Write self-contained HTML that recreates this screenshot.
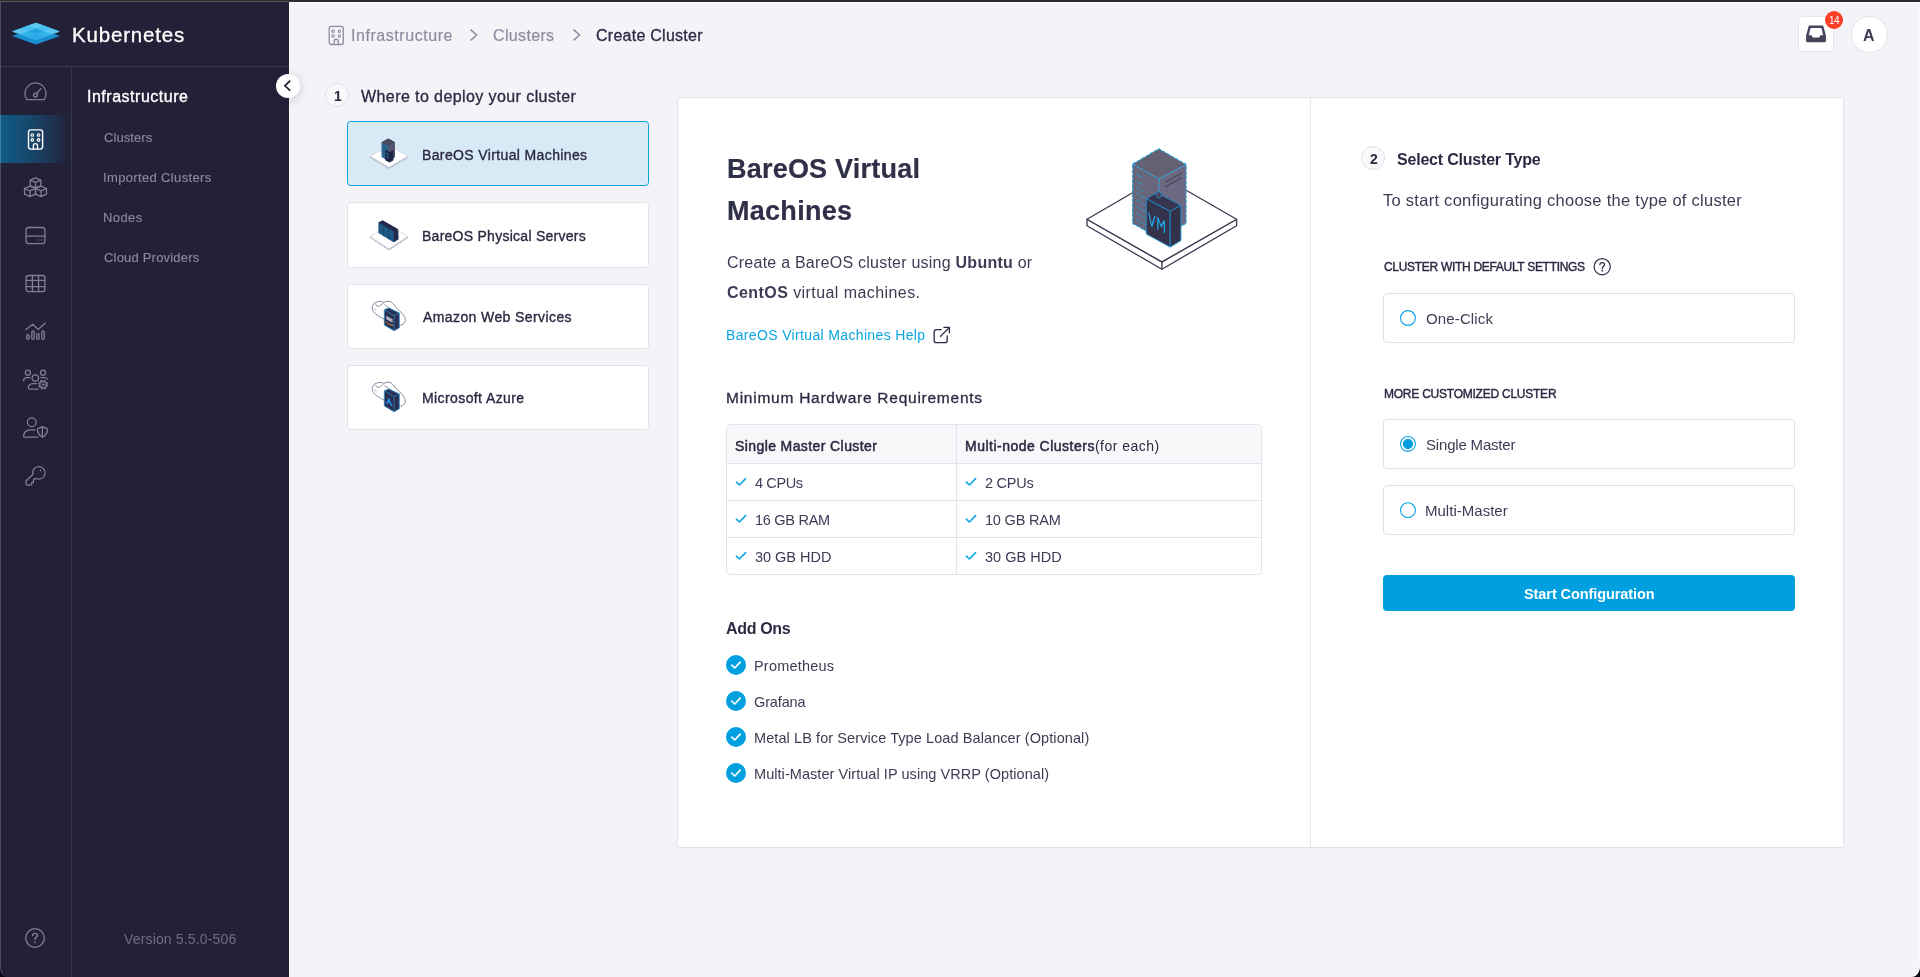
<!DOCTYPE html>
<html lang="en">
<head>
<meta charset="utf-8">
<title>Create Cluster - Kubernetes</title>
<style>
*{box-sizing:border-box;margin:0;padding:0}
html,body{width:1920px;height:977px;overflow:hidden;font-family:"Liberation Sans",sans-serif}
body{position:relative;background:#0b0616;font-family:"Liberation Sans",sans-serif;color:#2b2a43}
.abs{position:absolute}
.t{position:absolute;white-space:nowrap;line-height:1;display:block;will-change:transform}
#topbar{left:0;top:0;width:1920px;height:2px;background:#2b2b2b}
#topbar2{left:0;top:1px;width:289px;height:1px;background:#5c5c5c}
#sidebar{left:0;top:2px;width:289px;height:975px;background:#232138;border-bottom-left-radius:6px 10px;overflow:hidden}
#edgeL{left:0;top:2px;width:289px;height:975px;border-left:1px solid rgba(255,255,255,.2);border-bottom:1px solid rgba(255,255,255,0);border-bottom-left-radius:6px 10px}
#main{left:289px;top:2px;width:1631px;height:975px;background:#f3f3f8;border-bottom-right-radius:8px 11px;box-shadow:inset 1px 1px 0 #fdfdff,inset -1px 0 0 #f9f9fd}
#hdrline{left:0;top:66px;width:288px;height:1px;background:#3a384f}
#railline{left:71px;top:67px;width:1px;height:910px;background:#3a384f}
#active{left:0;top:115px;width:71px;height:48px;background:linear-gradient(90deg,#105c87 0%,#17486d 40%,#1f3150 75%,#232138 97%)}
.nav{position:absolute;left:15px;width:40px;height:40px;fill:none;stroke:#807f95;stroke-width:1.3;stroke-linecap:round;stroke-linejoin:round}
.card{position:absolute;left:347px;width:302px;height:65px;background:#fff;border:1px solid #e2e2e9;border-radius:3.5px}
.card.sel{background:#d7eaf6;border-color:#04a0e0}
#panel{left:677px;top:97px;width:1167px;height:751px;background:#fff;border:1px solid #e3e3eb;border-radius:2px}
#divider{left:1310px;top:98px;width:1px;height:749px;background:#e6e6ee}
.stepc{position:absolute;width:24px;height:24px;border-radius:50%;background:#f9f9fb;border:1px solid #e2e2ea}
.rbox{position:absolute;left:1383px;width:412px;height:50px;background:#fff;border:1px solid #e0e0e8;border-radius:4px}
.radio{position:absolute;left:1398px;width:20px;height:20px}
#btn{left:1383px;top:575px;width:412px;height:36px;background:#009fe0;border-radius:4px}
#tbl{left:726px;top:424px;width:536px;height:151px;border:1px solid #e3e3eb;border-radius:4px;background:#fff;overflow:hidden}
#tblh{left:0;top:0;width:536px;height:38px;background:#f8f8fb}
.hl{position:absolute;left:0;width:536px;height:1px;background:#e3e3eb}
#vl{left:229px;top:0;width:1px;height:151px;background:#e3e3eb}
.chk{position:absolute;width:12px;height:10px;fill:none;stroke:#0aa5e2;stroke-width:1.6;stroke-linecap:round;stroke-linejoin:round}
.cc{position:absolute;left:726px;width:20px;height:20px}
#inbox{left:1798px;top:16px;width:36px;height:36px;background:#fff;border:1px solid #e6e6ee;border-radius:5px}
#badge{left:1825px;top:11px;width:18px;height:18px;border-radius:50%;background:#fc3f27}
#avatar{left:1850.5px;top:15.5px;width:37px;height:37px;border-radius:50%;background:#fff;border:1px solid #e3e3eb}
#collapse{left:276px;top:74px;width:24px;height:24px;border-radius:50%;background:#fff;box-shadow:0 2px 12px rgba(40,40,70,.2)}
</style>
</head>
<body>
<div class="abs" id="main"></div>
<div class="abs" id="sidebar"></div>
<div class="abs" id="topbar"></div>
<div class="abs" id="topbar2"></div>
<!-- ===== Sidebar ===== -->
<div class="abs" id="hdrline"></div>
<div class="abs" id="railline"></div>
<div class="abs" id="active"></div>
<div class="abs" id="edgeL"></div>
<svg class="abs" style="left:10px;top:20px" width="52" height="28" viewBox="0 0 52 28">
  <polygon points="2,16 25.9,7.6 49.9,16 25.9,24.4" fill="#1b8fd2"/>
  <polygon points="2,11.4 25.9,2.7 49.9,11.4 25.9,20.2" fill="#33b4ea"/>
  <polygon points="25.9,2.7 33.9,5.6 25.9,8.5 17.9,5.6" fill="#5cc7f0"/>
  <polygon points="33.9,5.6 41.9,8.5 33.9,11.4 25.9,8.5" fill="#48bfee"/>
  <polygon points="17.9,5.6 25.9,8.5 17.9,11.4 9.9,8.5" fill="#48bfee"/>
  <polygon points="41.9,8.5 49.9,11.4 41.9,14.3 33.9,11.4" fill="#5cc7f0"/>
  <polygon points="9.9,8.5 17.9,11.4 9.9,14.3 2,11.4" fill="#5cc7f0"/>
  <polygon points="25.9,8.5 33.9,11.4 25.9,14.3 17.9,11.4" fill="#22a4e2"/>
  <polygon points="25.9,14.3 33.9,17.2 25.9,20.2 17.9,17.2" fill="#2aaae6"/>
</svg>
<!-- nav icons: each svg is 40x40 -->
<svg class="nav" style="top:72px" viewBox="0 0 40 40"><path d="M11.8 27.6H29.2A10.6 10.6 0 1 0 11.8 27.6Z"/><circle cx="20.5" cy="23.1" r="1.9"/><path d="M21.8 21.6L25.8 16.6"/></svg>
<svg class="nav" style="top:119px;stroke:#fff;stroke-width:1.4" viewBox="0 0 40 40"><rect x="13.5" y="10.9" width="14.1" height="19.2" rx="2.3"/><circle cx="17.3" cy="16" r="1.25" stroke-width="1.2"/><circle cx="23.6" cy="16" r="1.25" stroke-width="1.2"/><circle cx="17.3" cy="20.9" r="1.25" stroke-width="1.2"/><circle cx="23.6" cy="20.9" r="1.25" stroke-width="1.2"/><path d="M18.4 30V26.7A2.05 2.05 0 0 1 22.5 26.7V30"/></svg>
<svg class="nav" style="top:167px" viewBox="0 0 40 40"><path d="M20.5 10.9L25.8 13.1V18.8L20.5 20.9L15.2 18.8V13.1ZM15.2 13.1L20.5 15.4L25.8 13.1M20.5 15.4V20.9"/><path d="M14.95 19.2L20.5 21.5V27.2L14.95 29.7L9.5 27.2V21.5ZM9.5 21.5L14.95 23.8L20.5 21.5M14.95 23.8V29.7"/><path d="M26.05 19.2L31.5 21.5V27.2L26.05 29.7L20.5 27.2V21.5ZM20.5 21.5L26.05 23.8L31.5 21.5M26.05 23.8V29.7"/></svg>
<svg class="nav" style="top:215px" viewBox="0 0 40 40"><rect x="11.1" y="12.5" width="18.8" height="16.1" rx="2.6"/><path d="M11.1 21.1H29.9"/><circle cx="22.9" cy="24.9" r=".7" fill="#807f95" stroke="none"/><circle cx="26.6" cy="24.9" r=".7" fill="#807f95" stroke="none"/></svg>
<svg class="nav" style="top:263px" viewBox="0 0 40 40"><rect x="11.1" y="12.5" width="18.8" height="16.1" rx="2.6"/><path d="M17.4 12.5V28.6M23.55 12.5V28.6M11.1 17.4H29.9M11.1 23.55H29.9"/></svg>
<svg class="nav" style="top:311px" viewBox="0 0 40 40"><path d="M10.9 18.6L17.8 13.3L23.1 18.6L30.3 12.1"/><rect x="11.7" y="23.7" width="2.4" height="4.6" rx="1.2"/><rect x="16.8" y="20" width="2.4" height="8.3" rx="1.2"/><rect x="21.75" y="22.7" width="2.4" height="5.6" rx="1.2"/><rect x="26.85" y="19.85" width="2.4" height="8.45" rx="1.2"/></svg>
<svg class="nav" style="top:359px" viewBox="0 0 40 40"><circle cx="12.9" cy="13.7" r="2.5"/><circle cx="28.05" cy="13.7" r="2.5"/><circle cx="20.35" cy="19.05" r="3.2"/><path d="M8.4 21.6Q8.7 18.6 11.8 18.6H14.9"/><path d="M26 18.6H29.6Q31.6 18.6 32.4 20"/><path d="M21.4 24.6H18Q13.4 24.9 13.3 29.1Q13.3 30.1 14.3 30.1H23"/><circle cx="28.05" cy="25.6" r="3.3"/><circle cx="28.05" cy="25.6" r="4.3" stroke-width="1.3" stroke-dasharray="1.9 1.48" stroke-linecap="butt"/><ellipse cx="28.05" cy="25.6" rx="1.1" ry=".8" stroke-width="1"/></svg>
<svg class="nav" style="top:408px" viewBox="0 0 40 40"><circle cx="16.8" cy="14.3" r="4.4"/><path d="M20 21.9H15.4Q9.2 22.3 8.5 27.9Q8.5 29.1 9.8 29.1H23"/><path d="M27.35 18.7L32.6 20.8Q32.6 26.6 27.35 29.3Q22.4 26.6 22.4 20.8ZM27.35 18.7V29.3"/></svg>
<svg class="nav" style="top:455px" viewBox="0 0 40 40"><path d="M17.9 19.6L11.1 25.7V28.8Q11.1 30.1 12.4 30.1H15.5Q16.6 30.1 16.6 29V27.6H18.4V24.9L20.9 23.3A6.2 6.2 0 1 0 17.9 19.6Z"/><circle cx="25.5" cy="15.5" r=".75" fill="#a09fb3" stroke="none"/></svg>
<svg class="nav" style="top:918.25px;left:15.2px" viewBox="0 0 40 40"><circle cx="20" cy="20" r="9.3"/><path d="M17.6 17.6Q17.7 15.4 20 15.4Q22.4 15.4 22.4 17.5Q22.4 18.8 21 19.6Q20 20.2 20 21.6" stroke-width="1.4"/><circle cx="20" cy="24.3" r=".9" fill="#807f95" stroke="none"/></svg>
<div class="abs" id="collapse"><svg class="abs" style="left:0;top:0" width="24" height="24" viewBox="0 0 24 24"><path d="M14.2 6.7L8.9 11.8L14.2 16.7" fill="none" stroke="#1f1d34" stroke-width="1.7"/></svg></div>
<!-- ===== Top right ===== -->
<div class="abs" id="inbox"><svg class="abs" style="left:6.3px;top:6.8px" width="22" height="20" viewBox="0 0 22 20"><path d="M4.6 1.6H17.4Q18.3 1.6 18.5 2.4L20.9 11.6V16.8Q20.9 18.3 19.4 18.3H2.6Q1.1 18.3 1.1 16.8V11.6L3.5 2.4Q3.7 1.6 4.6 1.6ZM5.6 4L3.8 11.3H6.6L7.8 13.6H14.2L15.4 11.3H18.2L16.4 4Z" fill="#46445c" fill-rule="evenodd"/></svg></div>
<div class="abs" id="badge"></div>
<div class="abs" id="avatar"></div>
<!-- breadcrumb icon -->
<svg class="abs" style="left:326px;top:23px;fill:none;stroke:#8d8da0;stroke-width:1.3;stroke-linecap:round;stroke-linejoin:round" width="20" height="24" viewBox="0 0 20 24"><rect x="3.2" y="3.3" width="14.1" height="18.2" rx="2.3"/><circle cx="7.1" cy="8.3" r="1.2" stroke-width="1.1"/><circle cx="13.4" cy="8.3" r="1.2" stroke-width="1.1"/><circle cx="7.1" cy="13" r="1.2" stroke-width="1.1"/><circle cx="13.4" cy="13" r="1.2" stroke-width="1.1"/><path d="M8.2 21.4V18.3A2.05 2.05 0 0 1 12.3 18.3V21.4"/></svg>
<svg class="abs" style="left:468px;top:27px;fill:none;stroke:#8d8da0;stroke-width:1.5" width="12" height="16" viewBox="0 0 12 16"><path d="M2.6 2.6L8.6 8L2.6 13.4"/></svg>
<svg class="abs" style="left:571px;top:27px;fill:none;stroke:#8d8da0;stroke-width:1.5" width="12" height="16" viewBox="0 0 12 16"><path d="M2.6 2.6L8.6 8L2.6 13.4"/></svg>
<!-- step circles -->
<div class="stepc" style="left:325px;top:83px"></div>
<!-- option cards -->
<div class="card sel" style="top:121px"></div>
<div class="card" style="top:202px;height:66px"></div>
<div class="card" style="top:284px"></div>
<div class="card" style="top:365px"></div>
<!-- card icons (60x60 box each, origin = zoom origin) -->
<svg class="abs" style="left:360px;top:125px" width="60" height="60" viewBox="0 0 60 60">
  <polygon points="10.1,32.5 28.9,21.6 47.9,32.5 28.9,43.6" fill="#d9d9e3"/>
  <path d="M10.1 32.2L28.9 43.2L47.9 32.2" fill="none" stroke="#9a9aae" stroke-width="1.3" stroke-dasharray="1 1.1"/>
  <polygon points="10.1,31.3 28.9,20.5 47.9,31.3 28.9,42.3" fill="#fff" stroke="#c6c6d4" stroke-width=".6"/>
  <polygon points="28.3,13.5 35,17.2 35,31.9 28.3,35.8 21.5,31.9 21.5,17.2" fill="#2d668c"/>
  <polygon points="28.3,13.5 35,17.2 28.3,21 21.5,17.2" fill="#4a4b62"/>
  <polygon points="28.3,21 35,17.2 35,31.9 28.3,35.8" fill="#545574"/>
  <polygon points="25.2,24.6 29.6,27 33.5,24.9 33.5,35.2 29.6,37.6 25.2,35.2" fill="#1c2447"/>
  <path d="M26 28.2L29 29.8M26 31.2L29 32.8" stroke="#2c7fb4" stroke-width="1"/>
</svg>
<svg class="abs" style="left:360px;top:206px" width="60" height="60" viewBox="0 0 60 60">
  <polygon points="10.1,31.6 28.9,20.6 47.9,31.6 28.9,44.2" fill="#d9d9e3"/>
  <path d="M10.1 31.3L28.9 43.8L47.9 31.3" fill="none" stroke="#9a9aae" stroke-width="1.3" stroke-dasharray="1 1.1"/>
  <polygon points="10.1,30.4 28.9,19.6 47.9,30.4 28.9,42.9" fill="#fff" stroke="#c6c6d4" stroke-width=".6"/>
  <polygon points="18.4,16.6 22.7,14.4 38.1,23.3 38.4,33.2 33.5,36.2 18.4,27" fill="#1f5a85"/>
  <polygon points="18.4,16.6 22.7,14.4 38.1,23.3 33.6,25.6" fill="#232748"/>
  <polygon points="33.6,25.6 38.1,23.3 38.4,33.2 33.5,36.2" fill="#262a4c"/>
  <path d="M23.6 19.6V30.2M28.7 22.6V33.2" stroke="#18456b" stroke-width="1"/>
</svg>
<svg class="abs" style="left:360px;top:287.4px" width="60" height="60" viewBox="0 0 60 60">
  <path d="M12.3 19.5Q13 15.6 17.6 14.7Q21.5 13.6 23.6 15.4Q25.8 13.8 30.2 14.3Q33.8 16.6 35.9 20.5Q40 23.6 43.3 28Q46.2 31.6 45.3 34.6Q43.6 37.6 40.6 38.3L24 32.2Q15.5 27.8 13.1 24.2Q11.8 22 12.3 19.5Z" fill="#fff" stroke="#8f8fa4" stroke-width="1"/>
  <path d="M15.4 16.8Q16.6 20.4 19.6 19.2Q22.6 16.4 24.2 15.3M24.4 17.6Q29 19.8 32.6 24.2M14.6 22.2L16.4 23.2" fill="none" stroke="#8f8fa4" stroke-width=".9"/>
  <polygon points="24.3,22.8 28.9,21 39.3,25.9 39.3,40.8 34.1,43.8 24.3,38" fill="#2b2f52" stroke="#2a8cc6" stroke-width=".8" stroke-linejoin="round"/>
  <path d="M24.3 22.8L34.1 28.7L39.3 25.9M34.1 28.7V43.8" fill="none" stroke="#2a8cc6" stroke-width=".7"/>
  <path d="M26.4 29.6L32.6 33.2M26.4 31.4L32.6 35" stroke="#c4c4cf" stroke-width="1.3"/>
  <path d="M25.8 34.6Q29.4 38.6 33.4 38.4" fill="none" stroke="#d98a2b" stroke-width="1"/>
</svg>
<svg class="abs" style="left:360px;top:368.4px" width="60" height="60" viewBox="0 0 60 60">
  <path d="M12.3 19.5Q13 15.6 17.6 14.7Q21.5 13.6 23.6 15.4Q25.8 13.8 30.2 14.3Q33.8 16.6 35.9 20.5Q40 23.6 43.3 28Q46.2 31.6 45.3 34.6Q43.6 37.6 40.6 38.3L24 32.2Q15.5 27.8 13.1 24.2Q11.8 22 12.3 19.5Z" fill="#fff" stroke="#8f8fa4" stroke-width="1"/>
  <path d="M15.4 16.8Q16.6 20.4 19.6 19.2Q22.6 16.4 24.2 15.3M24.4 17.6Q29 19.8 32.6 24.2M14.6 22.2L16.4 23.2" fill="none" stroke="#8f8fa4" stroke-width=".9"/>
  <polygon points="24.3,22.8 28.9,21 39.3,25.9 39.3,40.8 34.1,43.8 24.3,38" fill="#2b2f52" stroke="#2a8cc6" stroke-width=".8" stroke-linejoin="round"/>
  <path d="M24.3 22.8L34.1 28.7L39.3 25.9M34.1 28.7V43.8" fill="none" stroke="#2a8cc6" stroke-width=".7"/>
  <path d="M26 35.2L28.8 29.6L32.8 38.6L30.6 37.6L29 34L27.6 36.2Z" fill="#1e8ede"/>
</svg>
<!-- ===== Main panel ===== -->
<div class="abs" id="panel"></div>
<div class="abs" id="divider"></div>
<div class="stepc" style="left:1361px;top:146px"></div>
<!-- illustration: 200x160 at (1060,130) -->
<svg class="abs" style="left:1060px;top:130px" width="200" height="160" viewBox="0 0 200 160">
  <g stroke="#3a384f" stroke-width="1.3" stroke-linejoin="round" fill="#fff">
    <polygon points="27,89.3 27,95.8 101.9,139.2 176.6,95.8 176.6,89.3 101.9,131.9"/>
    <polygon points="27,89.3 101.4,46 176.6,89.3 101.9,131.9"/>
    <path d="M101.9 131.9V139.2" fill="none"/>
  </g>
  <polygon points="98.8,18.8 126.1,34.4 98.8,48.8 72.6,34.1" fill="#636172"/>
  <polygon points="72.6,34.1 98.8,48.8 98.8,108.1 72.6,93.4" fill="#67667b"/>
  <polygon points="98.8,48.8 126.1,34.4 126.1,93.4 98.8,108.1" fill="#6c6a82"/>
  <g stroke="#2a9bd3" stroke-width="1" opacity=".75">
    <path d="M76 43.9L82.5 47.6M76 50.8L82.5 54.5M76 57L83.5 61.3M76 63L84.5 67.9M76 69.6L85.5 75M76 76.2L85.5 81.6M76 82.7L85.5 88.1M76 89.3L85.5 94.7"/>
  </g>
  <path d="M104.8 52.4L122 42.9M104.8 57.3L122 47.5" stroke="#514f66" stroke-width="1.6"/>
  <g fill="none" stroke="#1fa4de" stroke-width="1.1" stroke-dasharray="3.2 1.6" stroke-linejoin="round">
    <polygon points="98.8,18.8 126.1,34.4 126.1,93.4 98.8,108.1 72.6,93.4 72.6,34.1"/>
    <path d="M72.6 34.1L98.8 48.8L126.1 34.4M98.8 48.8V66"/>
  </g>
  <g stroke="#1d8fc8" stroke-width=".9" stroke-linejoin="round">
    <polygon points="86.3,68.8 97,62.7 120.9,75.3 110.2,81.4" fill="#36344e"/>
    <polygon points="86.3,68.8 110.2,81.4 110.2,117.1 86.3,104" fill="#35334c"/>
    <polygon points="110.2,81.4 120.9,75.3 120.9,110.6 110.2,117.1" fill="#33314a"/>
  </g>
  <path d="M96.4 62.9L98.9 61.6L101.4 63L101.4 67L98.9 68.3L96.4 67Z" fill="#4a4860" stroke="#1d8fc8" stroke-width=".7"/>
  <g transform="matrix(1 .527 0 1 88.6 82.3)" fill="none" stroke="#1fa4de" stroke-width="1.3" stroke-linejoin="miter">
    <path d="M0 0L3.2 12.5L6.4 0M9.2 12.5V0L12.5 7.5L15.8 0V12.5"/>
  </g>
</svg>
<!-- external link icon -->
<svg class="abs" style="left:932px;top:325px;fill:none;stroke:#2b2a43;stroke-width:1.3;stroke-linecap:round;stroke-linejoin:round" width="20" height="20" viewBox="0 0 20 20"><path d="M9.2 4.6H4.4Q2.2 4.6 2.2 6.8V15.4Q2.2 17.6 4.4 17.6H13Q15.2 17.6 15.2 15.4V10.8"/><path d="M8.6 11.2L17.2 2.6M12 2.4H17.4V7.8"/></svg>
<!-- requirements table -->
<div class="abs" id="tbl">
  <div class="abs" id="tblh"></div>
  <div class="hl" style="top:38px"></div><div class="hl" style="top:75px"></div><div class="hl" style="top:112px"></div>
  <div class="abs" id="vl"></div>
</div>
<svg class="chk" style="left:735px;top:477px" viewBox="0 0 12 10"><path d="M1.4 5.2L4.4 8L10.6 1.6"/></svg>
<svg class="chk" style="left:735px;top:514px" viewBox="0 0 12 10"><path d="M1.4 5.2L4.4 8L10.6 1.6"/></svg>
<svg class="chk" style="left:735px;top:551px" viewBox="0 0 12 10"><path d="M1.4 5.2L4.4 8L10.6 1.6"/></svg>
<svg class="chk" style="left:965px;top:477px" viewBox="0 0 12 10"><path d="M1.4 5.2L4.4 8L10.6 1.6"/></svg>
<svg class="chk" style="left:965px;top:514px" viewBox="0 0 12 10"><path d="M1.4 5.2L4.4 8L10.6 1.6"/></svg>
<svg class="chk" style="left:965px;top:551px" viewBox="0 0 12 10"><path d="M1.4 5.2L4.4 8L10.6 1.6"/></svg>
<!-- add-on checks -->
<svg class="cc" style="top:655px" viewBox="0 0 20 20"><circle cx="10" cy="10" r="10" fill="#009fe0"/><path d="M5.8 10.2L8.8 13L14.2 7.2" fill="none" stroke="#fff" stroke-width="1.7" stroke-linecap="round" stroke-linejoin="round"/></svg>
<svg class="cc" style="top:691px" viewBox="0 0 20 20"><circle cx="10" cy="10" r="10" fill="#009fe0"/><path d="M5.8 10.2L8.8 13L14.2 7.2" fill="none" stroke="#fff" stroke-width="1.7" stroke-linecap="round" stroke-linejoin="round"/></svg>
<svg class="cc" style="top:727px" viewBox="0 0 20 20"><circle cx="10" cy="10" r="10" fill="#009fe0"/><path d="M5.8 10.2L8.8 13L14.2 7.2" fill="none" stroke="#fff" stroke-width="1.7" stroke-linecap="round" stroke-linejoin="round"/></svg>
<svg class="cc" style="top:763px" viewBox="0 0 20 20"><circle cx="10" cy="10" r="10" fill="#009fe0"/><path d="M5.8 10.2L8.8 13L14.2 7.2" fill="none" stroke="#fff" stroke-width="1.7" stroke-linecap="round" stroke-linejoin="round"/></svg>
<!-- right panel -->
<svg class="abs" style="left:1592px;top:257px;fill:none;stroke:#2b2a43;stroke-width:1.2;stroke-linecap:round" width="20" height="20" viewBox="0 0 20 20"><circle cx="10.2" cy="9.7" r="8.1"/><path d="M7.9 7.7Q8 5.6 10.2 5.6Q12.5 5.6 12.5 7.6Q12.5 8.8 11.2 9.6Q10.2 10.2 10.2 11.4" stroke-width="1.3"/><circle cx="10.2" cy="13.7" r=".85" fill="#2b2a43" stroke="none"/></svg>
<div class="rbox" style="top:293px"></div>
<div class="rbox" style="top:419px"></div>
<div class="rbox" style="top:485px"></div>
<svg class="radio" style="top:308px" viewBox="0 0 20 20"><circle cx="9.95" cy="10" r="7.4" fill="#fff" stroke="#08a2e1" stroke-width="1.12"/></svg>
<svg class="radio" style="top:434px" viewBox="0 0 20 20"><circle cx="9.95" cy="9.95" r="7.4" fill="#fff" stroke="#08a2e1" stroke-width="1.12"/><circle cx="9.95" cy="9.95" r="5.15" fill="#009fe0"/></svg>
<svg class="radio" style="top:500px" viewBox="0 0 20 20"><circle cx="9.95" cy="10.2" r="7.4" fill="#fff" stroke="#08a2e1" stroke-width="1.12"/></svg>
<div class="abs" id="btn"></div>
<!-- ===== Text ===== -->
<span class="t" style="left:72.40px;top:24.80px;font-size:20.5px;color:#ffffff;letter-spacing:0.822px;-webkit-text-stroke:0.3px #ffffff">Kubernetes</span>
<span class="t" style="left:87.00px;top:89.00px;font-size:16px;color:#ffffff;letter-spacing:0.511px;-webkit-text-stroke:0.35px #ffffff">Infrastructure</span>
<span class="t" style="left:104.30px;top:131.00px;font-size:13px;color:#8a899c;letter-spacing:0.075px;-webkit-text-stroke:0.15px #8a899c">Clusters</span>
<span class="t" style="left:103.30px;top:171.00px;font-size:13px;color:#8a899c;letter-spacing:0.351px;-webkit-text-stroke:0.15px #8a899c">Imported Clusters</span>
<span class="t" style="left:103.30px;top:211.00px;font-size:13px;color:#8a899c;letter-spacing:0.405px;-webkit-text-stroke:0.15px #8a899c">Nodes</span>
<span class="t" style="left:104.30px;top:251.20px;font-size:13px;color:#8a899c;letter-spacing:0.194px;-webkit-text-stroke:0.15px #8a899c">Cloud Providers</span>
<span class="t" style="left:123.80px;top:932.20px;font-size:14px;color:#6f6e85;letter-spacing:0.153px">Version 5.5.0-506</span>
<span class="t" style="left:350.60px;top:28.10px;font-size:16px;color:#8d8da0;letter-spacing:0.557px;-webkit-text-stroke:0.2px #8d8da0">Infrastructure</span>
<span class="t" style="left:493.30px;top:28.10px;font-size:16px;color:#8d8da0;letter-spacing:0.346px;-webkit-text-stroke:0.2px #8d8da0">Clusters</span>
<span class="t" style="left:595.90px;top:28.10px;font-size:16px;color:#2b2a43;letter-spacing:0.260px;-webkit-text-stroke:0.3px #2b2a43">Create Cluster</span>
<span class="t" style="left:333.90px;top:89.00px;font-size:14px;color:#2b2a43;letter-spacing:-1.200px;font-weight:700">1</span>
<span class="t" style="left:361.40px;top:88.90px;font-size:16px;color:#2b2a43;letter-spacing:0.414px;-webkit-text-stroke:0.3px #2b2a43">Where to deploy your cluster</span>
<span class="t" style="left:1828.60px;top:16.20px;font-size:10px;color:#ffffff;letter-spacing:-0.562px">14</span>
<span class="t" style="left:1863.40px;top:27.80px;font-size:16px;color:#3d3c55;letter-spacing:-1.000px;font-weight:700">A</span>
<span class="t" style="left:422.20px;top:148.10px;font-size:14px;color:#2b2a43;letter-spacing:0.372px;-webkit-text-stroke:0.35px #2b2a43">BareOS Virtual Machines</span>
<span class="t" style="left:422.20px;top:229.30px;font-size:14px;color:#2b2a43;letter-spacing:0.262px;-webkit-text-stroke:0.35px #2b2a43">BareOS Physical Servers</span>
<span class="t" style="left:422.60px;top:310.00px;font-size:14px;color:#2b2a43;letter-spacing:0.403px;-webkit-text-stroke:0.35px #2b2a43">Amazon Web Services</span>
<span class="t" style="left:422.20px;top:391.00px;font-size:14px;color:#2b2a43;letter-spacing:0.403px;-webkit-text-stroke:0.35px #2b2a43">Microsoft Azure</span>
<span class="t" style="left:726.80px;top:155.90px;font-size:27px;color:#302f48;letter-spacing:0.217px;font-weight:700;-webkit-text-stroke:0.2px #302f48">BareOS Virtual</span>
<span class="t" style="left:727.00px;top:197.60px;font-size:27px;color:#302f48;letter-spacing:0.282px;font-weight:700;-webkit-text-stroke:0.2px #302f48">Machines</span>
<span class="t" style="left:726.70px;top:254.50px;font-size:16px;color:#3d3c55;letter-spacing:0.238px">Create a BareOS cluster using <b>Ubuntu</b> or</span>
<span class="t" style="left:726.70px;top:284.50px;font-size:16px;color:#3d3c55;letter-spacing:0.430px"><b>CentOS</b> virtual machines.</span>
<span class="t" style="left:725.70px;top:328.00px;font-size:14px;color:#0aa5e2;letter-spacing:0.351px">BareOS Virtual Machines Help</span>
<span class="t" style="left:725.60px;top:390.00px;font-size:15.5px;color:#2b2a43;letter-spacing:0.746px;-webkit-text-stroke:0.3px #2b2a43">Minimum Hardware Requirements</span>
<span class="t" style="left:735.00px;top:438.60px;font-size:14px;color:#2b2a43;letter-spacing:0.402px;-webkit-text-stroke:0.5px #2b2a43">Single Master Cluster</span>
<span class="t" style="left:965.30px;top:438.60px;font-size:14px;color:#2b2a43;letter-spacing:0.488px"><span style="-webkit-text-stroke:.5px #2b2a43">Multi-node Clusters</span>(for each)</span>
<span class="t" style="left:755.30px;top:475.50px;font-size:14.5px;color:#3d3c55;letter-spacing:-0.381px">4 CPUs</span>
<span class="t" style="left:755.30px;top:512.70px;font-size:14.5px;color:#3d3c55;letter-spacing:-0.272px">16 GB RAM</span>
<span class="t" style="left:755.30px;top:549.60px;font-size:14.5px;color:#3d3c55;letter-spacing:-0.022px">30 GB HDD</span>
<span class="t" style="left:985.30px;top:475.50px;font-size:14.5px;color:#3d3c55;letter-spacing:-0.241px">2 CPUs</span>
<span class="t" style="left:985.30px;top:512.70px;font-size:14.5px;color:#3d3c55;letter-spacing:-0.197px">10 GB RAM</span>
<span class="t" style="left:985.30px;top:549.60px;font-size:14.5px;color:#3d3c55;letter-spacing:0.028px">30 GB HDD</span>
<span class="t" style="left:725.80px;top:620.80px;font-size:16px;color:#2b2a43;letter-spacing:-0.328px;font-weight:700">Add Ons</span>
<span class="t" style="left:753.70px;top:659.20px;font-size:14.5px;color:#3d3c55;letter-spacing:0.197px">Prometheus</span>
<span class="t" style="left:753.70px;top:695.20px;font-size:14.5px;color:#3d3c55;letter-spacing:-0.138px">Grafana</span>
<span class="t" style="left:753.70px;top:731.20px;font-size:14.5px;color:#3d3c55;letter-spacing:0.087px">Metal LB for Service Type Load Balancer (Optional)</span>
<span class="t" style="left:753.70px;top:767.10px;font-size:14.5px;color:#3d3c55;letter-spacing:0.056px">Multi-Master Virtual IP using VRRP (Optional)</span>
<span class="t" style="left:1369.50px;top:152.00px;font-size:14px;color:#2b2a43;letter-spacing:-0.400px;font-weight:700">2</span>
<span class="t" style="left:1397.10px;top:152.00px;font-size:16px;color:#2b2a43;letter-spacing:-0.201px;font-weight:700">Select Cluster Type</span>
<span class="t" style="left:1383.40px;top:192.10px;font-size:16.5px;color:#3d3c55;letter-spacing:0.271px">To start configurating choose the type of cluster</span>
<span class="t" style="left:1383.60px;top:261.30px;font-size:12px;color:#2b2a43;letter-spacing:-0.303px;-webkit-text-stroke:0.4px #2b2a43">CLUSTER WITH DEFAULT SETTINGS</span>
<span class="t" style="left:1426.30px;top:311.20px;font-size:15px;color:#3d3c55;letter-spacing:0.132px">One-Click</span>
<span class="t" style="left:1383.90px;top:387.50px;font-size:12px;color:#2b2a43;letter-spacing:-0.238px;-webkit-text-stroke:0.4px #2b2a43">MORE CUSTOMIZED CLUSTER</span>
<span class="t" style="left:1426.30px;top:437.40px;font-size:15px;color:#3d3c55;letter-spacing:-0.184px">Single Master</span>
<span class="t" style="left:1425.30px;top:503.30px;font-size:15px;color:#3d3c55;letter-spacing:0.017px">Multi-Master</span>
<span class="t" style="left:1524.00px;top:587.10px;font-size:14.5px;color:#ffffff;letter-spacing:-0.080px;font-weight:700">Start Configuration</span>
</body>
</html>
